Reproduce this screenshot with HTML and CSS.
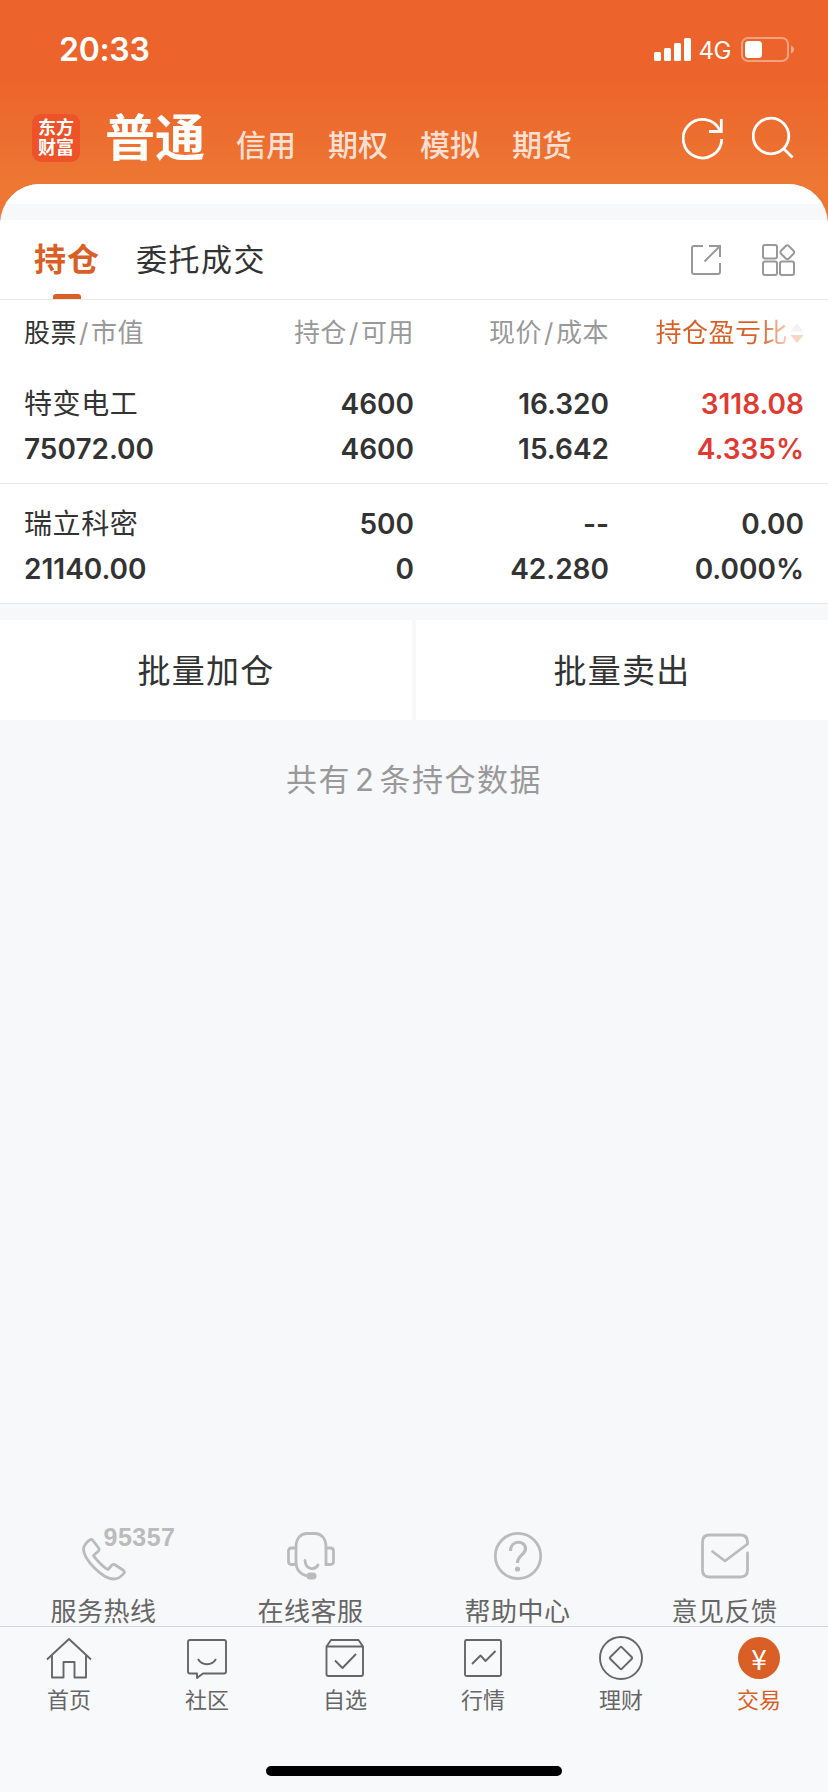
FILE: index.html
```
<!DOCTYPE html>
<html lang="zh-CN">
<head>
  <meta charset="UTF-8">
  <meta name="viewport" content="width=device-width, initial-scale=1.0">
  <title>持仓</title>
  <link rel="stylesheet" href="styles.css">
</head>
<body>
  <div class="page">
    <div class="status-bar">
      <span class="time">20:33</span>
      <div class="status-icons">
        <svg width="37" height="24" viewBox="0 0 37 24" fill="#fff">
          <rect x="0" y="14" width="7" height="9" rx="1.5"/>
          <rect x="10" y="10" width="7" height="13" rx="1.5"/>
          <rect x="20" y="5" width="7" height="18" rx="1.5"/>
          <rect x="30" y="0" width="7" height="23" rx="1.5"/>
        </svg>
        <span class="network">4G</span>
        <svg width="54" height="26" viewBox="0 0 54 26">
          <rect x="1" y="1" width="46" height="23" rx="6" fill="none" stroke="#fff" stroke-opacity=".4" stroke-width="2"/>
          <rect x="4" y="4" width="17" height="17" rx="3.5" fill="#fff"/>
          <path d="M50 8.500c4 1.500 4 6.500 0 8z" fill="#fff" fill-opacity=".45"/>
        </svg>
      </div>
    </div>

    <header class="header">
      <div class="logo"><span>东方</span><span>财富</span></div>
      <h1 class="account">普通</h1>
      <nav class="account-tabs">
        <a>信用</a>
        <a>期权</a>
        <a>模拟</a>
        <a>期货</a>
      </nav>
      <svg class="refresh" width="44" height="44" viewBox="0 0 44 44" fill="none" stroke="#fff" stroke-width="2.8">
        <path d="M39.800 23A19.300 19.300 0 1 1 38 14.500"/>
        <path d="M39.300 3V15.500H27"/>
      </svg>
      <svg class="search" width="44" height="44" viewBox="0 0 44 44" fill="none" stroke="#fff" stroke-width="2.8">
        <circle cx="19" cy="20" r="17.800"/>
        <path d="M31.500 32.500L40.500 41.500"/>
      </svg>
    </header>

    <main class="sheet">
      <div class="strip"></div>

      <div class="tabs">
        <div class="tab active">持仓</div>
        <div class="tab">委托成交</div>
        <div class="tools">
          <svg width="32" height="32" viewBox="0 0 32 32" fill="none" stroke="#999" stroke-width="2">
            <path d="M13 2H4Q2 2 2 4V28Q2 30 4 30H28Q30 30 30 28V19"/>
            <path d="M19 2H30V13M30 2L14.500 17.500"/>
          </svg>
          <svg width="34" height="34" viewBox="0 0 34 34" fill="none" stroke="#999" stroke-width="2">
            <rect x="2" y="2" width="14" height="13.500" rx="2"/>
            <rect x="2" y="18.500" width="14" height="13.500" rx="2"/>
            <rect x="19" y="18.500" width="14" height="13.500" rx="2"/>
            <rect x="20.800" y="3.700" width="11" height="11" rx="2.500" transform="rotate(45 26.300 9.200)"/>
          </svg>
        </div>
      </div>

      <div class="table-head">
        <div><b>股票</b><i>/</i>市值</div>
        <div>持仓<i>/</i>可用</div>
        <div>现价<i>/</i>成本</div>
        <div class="sorted">
          <span>持仓盈亏比</span>
          <svg width="14" height="22" viewBox="0 0 14 22">
            <path d="M7 1L13.500 9.500H.5z" fill="#f3f3f3"/>
            <path d="M7 21L13.500 13H.5z" fill="#f8d6c3"/>
          </svg>
        </div>
      </div>

      <div class="row">
        <div><span class="name">特变电工</span>75072.00</div>
        <div>4600<br>4600</div>
        <div>16.320<br>15.642</div>
        <div class="up">3118.08<br>4.335%</div>
      </div>
      <div class="row">
        <div><span class="name">瑞立科密</span>21140.00</div>
        <div>500<br>0</div>
        <div>--<br>42.280</div>
        <div>0.00<br>0.000%</div>
      </div>

      <div class="actions">
        <button type="button">批量加仓</button>
        <button type="button">批量卖出</button>
      </div>

      <p class="count">共有<span>2</span>条持仓数据</p>

      <div class="help">
        <div class="help-item">
          <div class="hotline">
            <svg width="48" height="48" viewBox="0 0 48 48" fill="none" stroke="#bbb" stroke-width="2.8" stroke-linejoin="round">
              <path d="M11.500 4.500C9 6 4.500 10 4.500 14C4.500 24 23 44 35 44C39.500 44 44 39.500 45.500 37.500Q45.500 36 44 35L35.500 29.500Q34 29 33 30L29 34.500C25 33 16.500 24 14.500 20.500L19.500 16Q20.500 15 20 13.500L13.500 5Q12.500 4 11.500 4.500z"/>
            </svg>
            <span class="hotline-number">95357</span>
          </div>
          <span>服务热线</span>
        </div>
        <div class="help-item">
          <svg width="50" height="50" viewBox="0 0 50 50" fill="none" stroke="#bbb" stroke-width="2.8" stroke-linecap="round">
            <path d="M10 16V31C10 39 15 44.500 23 45M10 16C10 7 15 2.500 21 2.500H29C35 2.500 40 7 40 16V33.500"/>
            <path d="M10 17H5.500Q2.500 17 2.500 20V30.500Q2.500 33.500 5.500 33.500H10M40 17H44.500Q47.500 17 47.500 20V30.500Q47.500 33.500 44.500 33.500H40"/>
            <path d="M19 29.500C19.500 39 29 39.500 32 34"/>
            <rect x="20.500" y="41.500" width="10" height="7" rx="3.5" fill="#bbb" stroke="none"/>
          </svg>
          <span>在线客服</span>
        </div>
        <div class="help-item">
          <svg width="50" height="50" viewBox="0 0 50 50" fill="none" stroke="#bbb" stroke-width="2.8">
            <circle cx="25" cy="25" r="22.700"/>
            <path d="M17.500 20C17.500 8.500 32.500 9 32.500 17.500C32.500 24 24.500 24 24.500 32" stroke-width="3.2"/>
            <circle cx="24.500" cy="38" r="2.600" fill="#bbb" stroke="none"/>
          </svg>
          <span>帮助中心</span>
        </div>
        <div class="help-item">
          <svg width="50" height="50" viewBox="0 0 50 50" fill="none" stroke="#bbb" stroke-width="2.8">
            <path d="M47.500 22V39Q47.500 46 40.500 46H9.500Q2.500 46 2.500 39V11Q2.500 4 9.500 4H40.500Q47.500 4 47.500 11V13L25 30L12.500 20.500" stroke-linejoin="round" stroke-linecap="round"/>
          </svg>
          <span>意见反馈</span>
        </div>
      </div>
    </main>

    <footer class="footer">
      <nav class="tabbar">
        <a class="nav-item">
          <svg width="46" height="46" viewBox="0 0 46 46" fill="none" stroke="#666" stroke-width="1.9" stroke-linejoin="round">
            <path d="M1 24.500L23 4L45 24.500M6 20V42.500H17.500V27H28.500V42.500H40V20"/>
          </svg>
          <span>首页</span>
        </a>
        <a class="nav-item">
          <svg width="46" height="46" viewBox="0 0 46 46" fill="none" stroke="#666" stroke-width="1.9" stroke-linejoin="round">
            <path d="M6 5H40Q42 5 42 7V36.500Q42 38.500 40 38.500H19L13 43V38.500H6Q4 38.500 4 36.500V7Q4 5 6 5z"/>
            <path d="M14 24C18 31 28 31 32 24"/>
          </svg>
          <span>社区</span>
        </a>
        <a class="nav-item">
          <svg width="46" height="46" viewBox="0 0 46 46" fill="none" stroke="#666" stroke-width="1.9" stroke-linejoin="round">
            <path d="M4.500 11.500L9 5H36.500L41 11.500V39Q41 41 39 41H6.500Q4.500 41 4.500 39V11.500H41"/>
            <path d="M13 25.500L20.500 33L34 19"/>
          </svg>
          <span>自选</span>
        </a>
        <a class="nav-item">
          <svg width="46" height="46" viewBox="0 0 46 46" fill="none" stroke="#666" stroke-width="1.9" stroke-linejoin="round">
            <rect x="5" y="5" width="36" height="36" rx="1.5"/>
            <path d="M12 29L20.500 20.500L25.500 26L35.500 16"/>
          </svg>
          <span>行情</span>
        </a>
        <a class="nav-item">
          <svg width="46" height="46" viewBox="0 0 46 46" fill="none" stroke="#666" stroke-width="1.9" stroke-linejoin="round">
            <circle cx="23" cy="23" r="21"/>
            <rect x="14.800" y="14.800" width="16.400" height="16.400" rx="1" transform="rotate(45 23 23)"/>
          </svg>
          <span>理财</span>
        </a>
        <a class="nav-item active">
          <div class="yuan">¥</div>
          <span>交易</span>
        </a>
      </nav>
      <div class="home-indicator"></div>
    </footer>
  </div>
</body>
</html>
```

FILE: styles.css
```
* { box-sizing: border-box; }
body {
  margin: 0;
  font-family: Inter, "Noto Sans CJK SC", sans-serif;
  color: #333;
}
svg { display: block; flex: none; }
.page {
  width: 828px; height: 1792px;
  display: flex; flex-direction: column;
  background: linear-gradient(#ec632b 0, #ec632b 75px, #ed7733 184px, #f07833 232px);
}

/* status bar */
.status-bar {
  height: 100px; padding: 0 33px 0 59px;
  display: flex; align-items: center; justify-content: space-between;
  color: #fff;
}
.time { font-size: 32px; font-weight: 600; letter-spacing: -0.3px; margin-top: -1px; }
.status-icons { display: flex; align-items: center; }
.network { font-size: 24px; margin: 0 10px 0 8px; letter-spacing: -0.5px; }

/* header */
.header {
  height: 84px; padding: 0 32px;
  display: flex; align-items: flex-start;
  color: #fff;
}
.logo {
  width: 48px; height: 48px; margin-top: 14px;
  border-radius: 9px; background: #ee5229;
  display: flex; flex-direction: column; align-items: center; justify-content: center;
  font-size: 18px; font-weight: 700; line-height: 20px;
}
.account { margin: 1px 0 0 25px; font-size: 50px; font-weight: 700; line-height: 74px; }
.account-tabs {
  display: flex; gap: 32px; margin: 15px 0 0 31px;
  font-size: 30px; font-weight: 500; line-height: 60px;
  color: rgba(255,255,255,0.8);
}
.refresh { margin: 16px 0 0 auto; }
.search { margin: 16px 0 0 26px; }

/* content sheet */
.sheet {
  flex: 1; display: flex; flex-direction: column;
  background: #f7f8fa;
  border-radius: 40px 40px 0 0; overflow: hidden;
}
.strip { height: 36px; border-top: 20px solid #fff; }
.tabs {
  height: 80px; padding: 0 33px 0 34px;
  display: flex; align-items: stretch;
  background: #fff; border-bottom: 1px solid #e8e8e8;
}
.tab { font-size: 31px; letter-spacing: 1.5px; line-height: 80px; }
.tab + .tab { margin-left: 36px; }
.tab.active {
  font-size: 32px; letter-spacing: 1px;
  color: #d95f26; font-weight: 700;
  display: flex; flex-direction: column; align-items: center;
}
.tab.active::after {
  content: ""; width: 28px; height: 5px; margin-top: -6px;
  border-radius: 3px 3px 0 0; background: #d95f26;
}
.tools { margin-left: auto; display: flex; align-items: center; gap: 39px; }

/* holdings */
.table-head, .row {
  display: grid; grid-template-columns: 1fr 195px 195px 195px;
  padding: 0 24px; background: #fff; text-align: right;
}
.table-head > :first-child, .row > :first-child { text-align: left; }
.table-head {
  height: 64px; padding-top: 2px; line-height: 62px;
  font-size: 26px; letter-spacing: 0.5px; color: #999;
}
.table-head b { font-weight: 400; color: #333; }
.table-head i { font-style: normal; margin: 0 2px; }
.sorted { display: flex; align-items: center; justify-content: flex-end; gap: 2px; height: 62px; }
.sorted span {
  color: transparent; background: linear-gradient(90deg, #d95f26 78%, #f6d3c0 100%);
  background-clip: text; -webkit-background-clip: text;
}
.row {
  height: 120px; padding-top: 18px;
  font-size: 28px; font-weight: 600; line-height: 45px;
  border-bottom: 1px solid #e8e8e8;
}
.name { display: block; height: 45px; font-weight: 400; letter-spacing: 0.6px; }
.up { color: #e03a33; }

.actions { display: flex; gap: 4px; margin-top: 16px; }
.actions button {
  flex: 1; height: 100px; padding: 0 0 2px; border: none; background: #fff;
  font: inherit; font-size: 33px; letter-spacing: 1.2px; color: #333;
}
.count {
  margin: 36px 0 0; text-align: center;
  font-size: 31px; letter-spacing: 1.5px; line-height: 48px; color: #999;
}
.count span { margin: 0 4px; }

/* help links */
.help { display: flex; margin-top: auto; height: 95px; }
.help-item {
  flex: 1; display: flex; flex-direction: column; align-items: center;
  font-size: 26px; letter-spacing: 0.5px; line-height: 38px; color: #666;
}
.help-item > span { margin-top: 12px; }
.hotline { position: relative; width: 50px; height: 50px; padding-top: 4px; }
.hotline-number {
  position: absolute; left: 25px; top: -4px;
  font: bold 25px/20px "Liberation Sans", sans-serif; color: #bbb;
}

/* bottom bar */
.footer { height: 166px; background: #f8f9fb; border-top: 1px solid #d3d5dc; }
.tabbar { height: 139px; display: flex; padding-top: 8px; }
.nav-item {
  flex: 1; display: flex; flex-direction: column; align-items: center;
  font-size: 22px; line-height: 32px; color: #666;
}
.nav-item > span { margin-top: 3px; }
.nav-item.active { color: #d95f26; }
.yuan {
  width: 42px; height: 42px; margin: 2px 0; border-radius: 50%;
  background: #d95f26; color: #fff;
  font-family: "Noto Sans CJK SC", sans-serif;
  font-size: 28px; line-height: 42px; text-align: center;
}
.home-indicator {
  width: 296px; height: 10px; margin: 0 auto; border-radius: 5px;
  background: #000;
}
```
